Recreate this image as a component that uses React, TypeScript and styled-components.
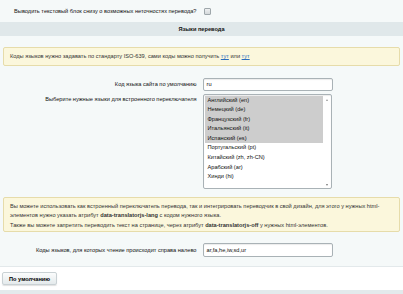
import React, { FC } from "react";
import styled, { createGlobalStyle } from "styled-components";

const GlobalStyle = createGlobalStyle`
  html, body {
    margin: 0;
    padding: 0;
    background: #f5f9f9;
  }
  body {
    font-family: "Liberation Sans", Arial, sans-serif;
    font-size: 5.65px;
    line-height: 1.15;
    color: #111;
  }
`;

const Page = styled.div`
  width: 403px;
  height: 294px;
  overflow: hidden;
  display: flex;
  flex-direction: column;
`;

const Content = styled.div`
  background: #f5f9f9;
  padding-bottom: 9px;
  border-bottom: 1px solid #e3e9eb;
`;

const Row = styled.div<{ $height?: number; $top?: number; $alignTop?: boolean }>`
  display: grid;
  grid-template-columns: 50% 50%;
  align-items: ${(p) => (p.$alignTop ? "start" : "center")};
  height: ${(p) => (p.$height ? `${p.$height}px` : "auto")};
  margin-top: ${(p) => p.$top ?? 0}px;
`;

const Label = styled.div<{ $padTop?: number }>`
  text-align: right;
  padding-right: 5px;
  padding-top: ${(p) => p.$padTop ?? 0}px;
  white-space: nowrap;
`;

const Field = styled.div`
  padding-left: 1px;
  display: flex;
  align-items: center;
`;

const Checkbox = styled.span`
  display: inline-block;
  width: 5px;
  height: 5px;
  border: 1px solid #9ea7ab;
  border-radius: 1px;
  background: linear-gradient(#eef0f1, #d3d8da);
  margin-left: 1px;
`;

const Heading = styled.div`
  height: 14px;
  line-height: 14px;
  background: #e0e8ea;
  text-align: center;
  font-weight: bold;
`;

const Note = styled.div<{ $top: number; $padTop: number; $padBottom: number }>`
  margin: ${(p) => p.$top}px 3px 0;
  padding: ${(p) => p.$padTop}px 6px ${(p) => p.$padBottom}px;
  background: #fbf7dc;
  border: 1px solid #e6dcaa;
  border-radius: 2px;
  line-height: 9.5px;
  color: #333;
`;

const Link = styled.a`
  color: #2a6ebd;
  text-decoration: underline;
`;

const TextInput = styled.div<{ $height: number }>`
  width: 125px;
  height: ${(p) => p.$height}px;
  line-height: ${(p) => p.$height}px;
  border: 1px solid #a9b2b6;
  border-radius: 2px;
  background: #fff;
  box-shadow: inset 0 1px 1px rgba(0, 0, 0, 0.08);
  padding-left: 3px;
  box-sizing: content-box;
`;

const ListBox = styled.div`
  width: 126px;
  height: 92px;
  border: 1px solid #a9b2b6;
  border-radius: 2px;
  background: #fff;
  box-shadow: inset 0 1px 1px rgba(0, 0, 0, 0.08);
  display: flex;
  padding: 1px 0 0 1px;
  box-sizing: content-box;
`;

const Options = styled.div`
  flex: 1;
`;

const Option = styled.div<{ $selected?: boolean }>`
  height: 9.6px;
  line-height: 9.6px;
  padding-left: 3px;
  background: ${(p) => (p.$selected ? "#cdcdcd" : "transparent")};
`;

const ScrollTrack = styled.div`
  width: 8px;
  display: flex;
  flex-direction: column;
  justify-content: space-between;
  align-items: center;
  padding: 3px 0 2px;
`;

const Arrow = styled.span<{ $down?: boolean }>`
  width: 0;
  height: 0;
  border-left: 1.5px solid transparent;
  border-right: 1.5px solid transparent;
  ${(p) =>
    p.$down
      ? "border-top: 2px solid #777;"
      : "border-bottom: 2px solid #999;"}
`;

const Footer = styled.div`
  background: #fff;
  flex: 1;
  padding: 5px 0 0 2px;
  display: flex;
  flex-direction: column;
`;

const Button = styled.button`
  align-self: flex-start;
  height: 13px;
  padding: 0 6px;
  border: 1px solid #c9d1d4;
  border-radius: 2px;
  background: linear-gradient(#fbfcfc, #e4eaec);
  box-shadow: 0 1px 1px rgba(0, 0, 0, 0.12);
  font-family: "Liberation Sans", Arial, sans-serif;
  font-size: 5.65px;
  font-weight: bold;
  color: #000;
`;

const BottomBar = styled.div`
  margin-top: auto;
  height: 4px;
  background: #e3eaec;
  margin-left: -2px;
`;

const languages = [
  { name: "Английский (en)", selected: true },
  { name: "Немецкий (de)", selected: true },
  { name: "Французский (fr)", selected: true },
  { name: "Итальянский (it)", selected: true },
  { name: "Испанский (es)", selected: true },
  { name: "Португальский (pt)" },
  { name: "Китайский (zh, zh-CN)" },
  { name: "Арабский (ar)" },
  { name: "Хинди (hi)" },
];

const App: FC = () => {
  return (
    <Page>
      <GlobalStyle />
      <Content>
        <Row $height={22}>
          <Label>Выводить текстовый блок снизу о возможных неточностях перевода?</Label>
          <Field>
            <Checkbox />
          </Field>
        </Row>
        <Heading>Языки перевода</Heading>
        <Note $top={11} $padTop={4} $padBottom={3}>
          Коды языков нужно задавать по стандарту ISO-639, сами коды можно получить{" "}
          <Link>тут</Link> или <Link>тут</Link>
        </Note>
        <Row $top={12}>
          <Label>Код языка сайта по умолчанию</Label>
          <Field>
            <TextInput $height={11}>ru</TextInput>
          </Field>
        </Row>
        <Row $top={3} $alignTop>
          <Label $padTop={2}>Выберите нужные языки для встроенного переключателя</Label>
          <Field>
            <ListBox>
              <Options>
                {languages.map((lang) => (
                  <Option key={lang.name} $selected={lang.selected}>
                    {lang.name}
                  </Option>
                ))}
              </Options>
              <ScrollTrack>
                <Arrow />
                <Arrow $down />
              </ScrollTrack>
            </ListBox>
          </Field>
        </Row>
        <Note $top={8} $padTop={4} $padBottom={1}>
          Вы можете использовать как встроенный переключатель перевода, так и интегрировать переводчик в свой дизайн, для этого у нужных html-
          <br />
          элементов нужно указать атрибут <b>data-translatorjs-lang</b> с кодом нужного языка.
          <br />
          Также вы можете запретить переводить текст на странице, через атрибут <b>data-translatorjs-off</b> у нужных html-элементов.
        </Note>
        <Row $top={11}>
          <Label>Коды языков, для которых чтение происходит справа налево</Label>
          <Field>
            <TextInput $height={12}>ar,fa,he,iw,sd,ur</TextInput>
          </Field>
        </Row>
      </Content>
      <Footer>
        <Button>По умолчанию</Button>
        <BottomBar />
      </Footer>
    </Page>
  );
};

export default App;
